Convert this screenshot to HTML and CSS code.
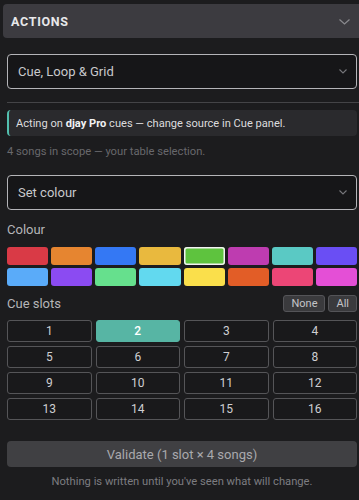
FILE: index.html
```html
<!DOCTYPE html>
<html>
<head>
<meta charset="utf-8">
<link rel="stylesheet" href="styles.css">
</head>
<body>
<div class="page">
  <div class="header">
    <span class="header-title">Actions</span>
    <svg class="chev-lg" width="11" height="6" viewBox="0 0 11 6"><path d="M0.5 0.5 L5.5 5 L10.5 0.5" fill="none" stroke="#8a8a8e" stroke-width="1.2"/></svg>
  </div>
  <div class="content">
    <div class="select sel1">
      <span>Cue, Loop &amp; Grid</span>
      <svg class="chev" width="8" height="5" viewBox="0 0 8 5"><path d="M0.5 0.5 L4 4 L7.5 0.5" fill="none" stroke="#77777b" stroke-width="1.1"/></svg>
    </div>
  </div>
  <div class="sep"></div>
  <div class="content">
    <div class="info">Acting on <b>djay Pro</b> cues — change source in Cue panel.</div>
    <div class="scope">4 songs in scope — your table selection.</div>
    <div class="select sel2">
      <span>Set colour</span>
      <svg class="chev" width="8" height="5" viewBox="0 0 8 5"><path d="M0.5 0.5 L4 4 L7.5 0.5" fill="none" stroke="#77777b" stroke-width="1.1"/></svg>
    </div>
    <div class="label colour-label">Colour</div>
    <div class="swatches">
      <div class="sw" style="background:#d93a46"></div>
      <div class="sw" style="background:#e68530"></div>
      <div class="sw" style="background:#3478f4"></div>
      <div class="sw" style="background:#e9b93e"></div>
      <div class="sw sel" style="background:#5ec33e"></div>
      <div class="sw" style="background:#be3cb0"></div>
      <div class="sw" style="background:#5ac9c4"></div>
      <div class="sw" style="background:#6a4ef4"></div>
      <div class="sw" style="background:#5aabf9"></div>
      <div class="sw" style="background:#8b4bf2"></div>
      <div class="sw" style="background:#66e08d"></div>
      <div class="sw" style="background:#62d9ef"></div>
      <div class="sw" style="background:#fadf4b"></div>
      <div class="sw" style="background:#e25d27"></div>
      <div class="sw" style="background:#ec4676"></div>
      <div class="sw" style="background:#e44fd6"></div>
    </div>
    <div class="slots-head">
      <span class="label">Cue slots</span>
      <div class="mini-btns">
        <button class="mini">None</button>
        <button class="mini">All</button>
      </div>
    </div>
    <div class="slots">
      <div class="slot">1</div>
      <div class="slot active">2</div>
      <div class="slot">3</div>
      <div class="slot">4</div>
      <div class="slot">5</div>
      <div class="slot">6</div>
      <div class="slot">7</div>
      <div class="slot">8</div>
      <div class="slot">9</div>
      <div class="slot">10</div>
      <div class="slot">11</div>
      <div class="slot">12</div>
      <div class="slot">13</div>
      <div class="slot">14</div>
      <div class="slot">15</div>
      <div class="slot">16</div>
    </div>
    <div class="validate">Validate (1 slot × 4 songs)</div>
    <div class="note">Nothing is written until you've seen what will change.</div>
  </div>
</div>
</body>
</html>
```

FILE: styles.css
```css
html, body {
  margin: 0;
  padding: 0;
  background: #1c1c1e;
  overflow: hidden;
}
body {
  font-family: Roboto, "Noto Sans", sans-serif;
  color: #cfcfd2;
  width: 359px;
  height: 500px;
}
.page {
  padding-top: 4px;
}
.header {
  margin-left: 3px;
  height: 34px;
  background: #3c3b40;
  border-radius: 4px 0 0 4px;
  display: flex;
  align-items: center;
  justify-content: space-between;
  padding: 0 9px 0 8px;
}
.header-title {
  text-transform: uppercase;
  font-weight: 700;
  font-size: 12.5px;
  letter-spacing: 0.7px;
  color: #e8e8ea;
}
.chev-lg {
  margin-top: 1px;
}
.content {
  padding: 0 2px 0 7px;
}
.select {
  height: 35px;
  box-sizing: border-box;
  border: 1.5px solid #b4b4b8;
  border-radius: 4px;
  background: #161618;
  display: flex;
  align-items: center;
  justify-content: space-between;
  padding: 0 9px 0 10px;
  font-size: 13px;
  color: #c9c9cc;
}
.sel1 {
  margin-top: 16px;
}
.sep {
  margin: 13px 0 0 7px;
  height: 1px;
  background: #444447;
}
.info {
  margin-top: 7px;
  height: 26px;
  box-sizing: border-box;
  background: #2a2a2d;
  border-left: 2px solid #52bfae;
  border-radius: 4px;
  display: flex;
  align-items: center;
  padding-left: 7px;
  font-size: 11.1px;
  color: #dcdcde;
  white-space: pre;
}
.info b {
  color: #f2f2f4;
  font-weight: 700;
}
.scope {
  margin-top: 8px;
  font-size: 11.2px;
  color: #68686c;
  line-height: 16px;
}
.sel2 {
  margin-top: 15px;
}
.label {
  font-size: 13px;
  color: #b5b5b8;
}
.colour-label {
  margin-top: 11px;
  line-height: 18px;
}
.swatches {
  margin-top: 8px;
  display: grid;
  grid-template-columns: repeat(8, 1fr);
  gap: 3px;
}
.sw {
  height: 18px;
  border-radius: 3px;
}
.sw.sel {
  box-shadow: inset 0 0 0 1.5px #f2f2f2;
}
.slots-head {
  margin-top: 9px;
  display: flex;
  justify-content: space-between;
  align-items: center;
  height: 17px;
}
.mini-btns {
  display: flex;
  gap: 3px;
}
.mini {
  font-family: inherit;
  font-size: 11px;
  height: 17px;
  padding: 0 7px;
  background: #3a3a3d;
  border: 1px solid #545458;
  border-radius: 3px;
  color: #c4c4c8;
  line-height: 15px;
}
.slots {
  margin-top: 8px;
  display: grid;
  grid-template-columns: repeat(4, 1fr);
  gap: 4px;
}
.slot {
  height: 22px;
  box-sizing: border-box;
  border: 1px solid #555558;
  border-radius: 3px;
  background: #19191b;
  display: flex;
  align-items: center;
  justify-content: center;
  font-size: 12px;
  color: #cfcfd2;
}
.slot.active {
  background: #57b5a4;
  border-color: #57b5a4;
  color: #ffffff;
  font-weight: 500;
}
.validate {
  margin-top: 21px;
  height: 26px;
  background: #404043;
  border-radius: 4px;
  display: flex;
  align-items: center;
  justify-content: center;
  font-size: 13px;
  color: #a9a9ad;
}
.note {
  margin-top: 8px;
  text-align: center;
  font-size: 11.2px;
  color: #7d7d81;
  line-height: 14px;
}
```
